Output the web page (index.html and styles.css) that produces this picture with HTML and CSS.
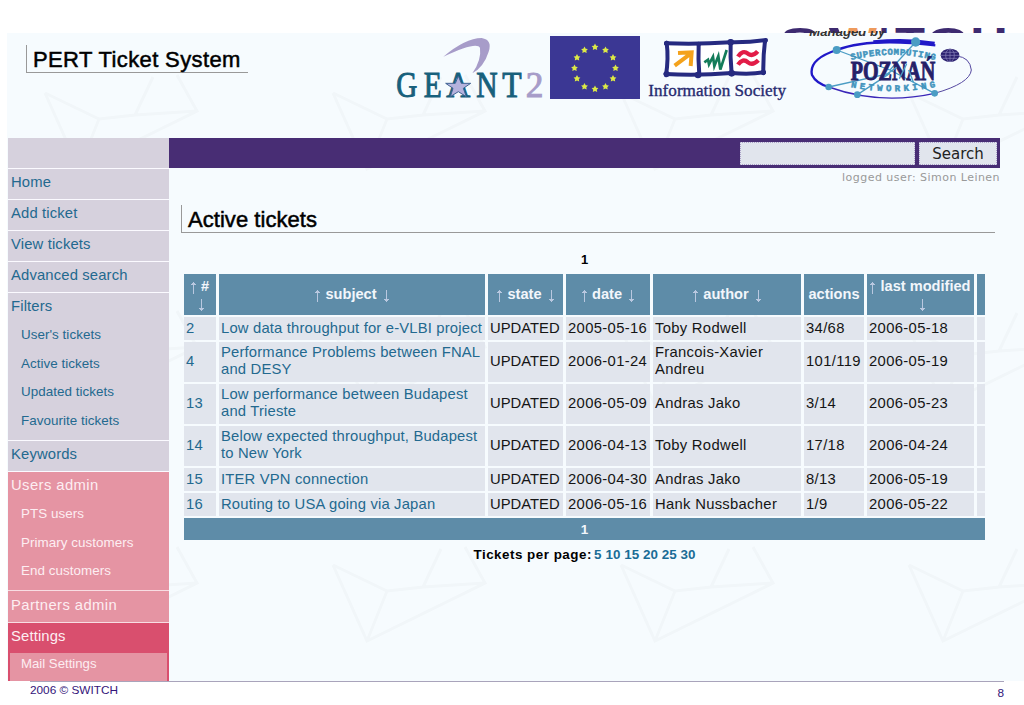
FILE: index.html
```
<!DOCTYPE html>
<html lang="en">
<head>
  <meta charset="UTF-8">
  <title>PERT Ticket System</title>
  <link rel="stylesheet" href="styles.css">
</head>
<body>

  <div class="slide-top">
    <svg class="switch-logo" width="228" height="33" viewBox="780 0 228 33">
      <g font-family="Liberation Sans" font-weight="bold" font-size="42" fill="#3d2a70">
        <text x="780" y="57" textLength="40" lengthAdjust="spacingAndGlyphs">S</text>
        <text x="829" y="57" textLength="48" lengthAdjust="spacingAndGlyphs" fill="#ee9a5c">W</text>
        <text x="879" y="57" textLength="10" lengthAdjust="spacingAndGlyphs">I</text>
        <text x="895" y="57" textLength="30" lengthAdjust="spacingAndGlyphs">T</text>
        <text x="926" y="57" textLength="42" lengthAdjust="spacingAndGlyphs">C</text>
        <text x="970" y="57" textLength="38" lengthAdjust="spacingAndGlyphs">H</text>
      </g>
      <path d="M829 28 H838 L840 33 H831 Z" fill="#3d2a70"/>
    </svg>
  </div>

  <div class="app">
    <!-- envelope watermark -->
    <svg class="watermark" width="1017" height="648">
      <defs>
        <pattern id="envelopes" x="30" y="38" width="288" height="236" patternUnits="userSpaceOnUse">
          <path d="M8 22 L42 98 L160 40 L140 4 M8 22 L62 48 L98 44 L116 6 M62 48 L42 98 M98 44 L160 40" fill="none" stroke="#f1f6f9" stroke-width="3"/>
        </pattern>
      </defs>
      <rect width="1017" height="648" fill="url(#envelopes)"/>
    </svg>

    <header>
      <h1>PERT Ticket System</h1>
      <div class="logos">
        <svg class="geant" width="155" height="66" viewBox="45 39 465 198">
          <path d="M190 110 Q255 55 305 54 Q338 60 326 95 Q312 140 277 160 Q305 120 300 84 Q292 62 190 110 Z" fill="#a79cc9"/>
          <g font-family="Liberation Serif" font-size="108" fill="#17607c" stroke="#17607c" stroke-width="3">
            <text x="49" y="230" textLength="63" lengthAdjust="spacingAndGlyphs">G</text>
            <text x="131" y="230" textLength="54" lengthAdjust="spacingAndGlyphs">E</text>
            <text x="199" y="230" textLength="72" lengthAdjust="spacingAndGlyphs">A</text>
            <text x="289" y="230" textLength="64" lengthAdjust="spacingAndGlyphs">N</text>
            <text x="367" y="230" textLength="58" lengthAdjust="spacingAndGlyphs">T</text>
            <text x="437" y="230" textLength="53" lengthAdjust="spacingAndGlyphs" fill="#a79cc9" stroke="#a79cc9">2</text>
          </g>
          <path d="M235 168 L244 190 L272 190 L250 205 L259 230 L235 215 L211 230 L219 205 L197 190 L226 190 Z" fill="#b5b2dd" stroke="#3f6292" stroke-width="3"/>
        </svg>

        <svg class="flag" width="90" height="63" viewBox="0 0 90 63">
          <defs>
            <path id="star" d="M0 -3.4 L1.2 -1.3 L3.4 -1 L1.8 .7 L2.2 3 L0 2 L-2.2 3 L-1.8 .7 L-3.4 -1 L-1.2 -1.3 Z"/>
          </defs>
          <rect width="90" height="63" fill="#3b3794"/>
          <g fill="#dce946">
            <use href="#star" x="45" y="11"/>
            <use href="#star" x="55.5" y="14"/>
            <use href="#star" x="63" y="21.5"/>
            <use href="#star" x="65.5" y="32"/>
            <use href="#star" x="63" y="42.5"/>
            <use href="#star" x="55.5" y="50.5"/>
            <use href="#star" x="45" y="53"/>
            <use href="#star" x="34.5" y="50.5"/>
            <use href="#star" x="27" y="42.5"/>
            <use href="#star" x="24.5" y="32"/>
            <use href="#star" x="27" y="21.5"/>
            <use href="#star" x="34.5" y="14"/>
          </g>
        </svg>

        <svg class="infosoc" width="142" height="69" viewBox="18 39 426 207">
          <path d="M80 70 L372 62 L368 160 L80 163 Z" fill="#fff"/>
          <g fill="none" stroke="#262a80" stroke-width="12" stroke-linecap="round">
            <path d="M78 70 Q170 74 272 67 Q330 68 378 60"/>
            <path d="M80 68 Q86 115 78 166"/>
            <path d="M176 72 Q174 115 178 166"/>
            <path d="M272 64 Q270 110 275 162"/>
            <path d="M375 62 Q369 110 370 160"/>
            <path d="M76 162 Q170 168 275 159 Q330 164 372 157"/>
          </g>
          <g fill="#262a80">
            <circle cx="80" cy="70" r="8"/><circle cx="176" cy="72" r="7"/><circle cx="272" cy="67" r="10"/><circle cx="375" cy="64" r="7"/>
            <circle cx="80" cy="162" r="9"/><circle cx="174" cy="165" r="10"/><circle cx="275" cy="160" r="10"/><circle cx="370" cy="157" r="8"/>
          </g>
          <path d="M104 137 L152 101 M114 99 L155 97 L152 138" fill="none" stroke="#f4a21c" stroke-width="12"/>
          <path d="M193 127 L204 119 L207 133 L219 110 L223 138 L235 108 L241 149 L260 90" fill="none" stroke="#147c5a" stroke-width="8"/>
          <path d="M294 110 Q308 88 324 101 Q338 111 353 94 M294 134 Q308 113 324 127 Q338 138 355 121" fill="none" stroke="#e21c47" stroke-width="13"/>
          <text x="25" y="228" font-family="Liberation Serif" font-size="50" fill="#262a70" stroke="#262a70" stroke-width="1" textLength="413" lengthAdjust="spacingAndGlyphs">Information Society</text>
        </svg>

        <svg class="poznan" width="166" height="70" viewBox="504 33 498 210">
          <defs>
            <path id="arc-top" d="M634 120 Q760 88 890 122"/>
            <path id="arc-bottom" d="M632 202 Q760 226 892 200"/>
          </defs>
          <text x="508" y="49" font-family="Liberation Sans" font-style="italic" font-weight="bold" font-size="36" fill="#333" textLength="228" lengthAdjust="spacingAndGlyphs">Managed by</text>
          <path d="M886 76 Q690 52 590 90 Q505 118 516 165 Q528 190 566 201" fill="none" stroke="#2018c8" stroke-width="7"/>
          <path d="M884 70 Q800 57 700 66" fill="none" stroke="#2018c8" stroke-width="10"/>
          <path d="M566 201 Q720 256 884 220" fill="none" stroke="#3a26b8" stroke-width="4"/>
          <path d="M884 220 Q990 190 994 150 Q990 112 950 108" fill="none" stroke="#5548a0" stroke-width="3"/>
          <path d="M590 90 L750 150 L827 66 M566 201 L750 160 L652 224 M750 150 L884 220" fill="none" stroke="#4a9cc4" stroke-width="4"/>
          <g font-family="Liberation Mono" font-weight="bold" fill="#3f93bc" stroke="#3f93bc" stroke-width="1.5">
            <text font-size="27"><textPath href="#arc-top" textLength="254">SUPERCOMPUTING</textPath></text>
            <text font-size="27"><textPath href="#arc-bottom" textLength="256">NETWORKING</textPath></text>
          </g>
          <text x="632" y="180" font-family="Liberation Serif" font-weight="bold" font-size="84" fill="#252068" stroke="#252068" stroke-width="3" textLength="254" lengthAdjust="spacingAndGlyphs">POZNAŃ</text>
          <path d="M735 166 L770 142 M778 176 L800 132 M820 186 L806 150" stroke="#4a9cc4" stroke-width="4"/>
          <g fill="#4a9cc4">
            <circle cx="827" cy="66" r="14"/><circle cx="590" cy="90" r="12"/><circle cx="566" cy="201" r="10"/>
            <circle cx="652" cy="224" r="10"/><circle cx="884" cy="220" r="10"/>
          </g>
          <ellipse cx="930" cy="106" rx="28" ry="20" fill="#2c2170"/>
          <path d="M903 106 H957 M930 87 V125 M908 97 H952 M908 115 H952" stroke="#8d87bd" stroke-width="2"/>
          <ellipse cx="930" cy="106" rx="13" ry="19" fill="none" stroke="#8d87bd" stroke-width="2"/>
        </svg>
      </div>
    </header>

    <div class="layout">
      <!-- SIDEBAR -->
      <nav class="menu">
        <div class="item"></div>
        <div class="item"><a href="#">Home</a></div>
        <div class="item"><a href="#">Add ticket</a></div>
        <div class="item"><a href="#">View tickets</a></div>
        <div class="item"><a href="#">Advanced search</a></div>
        <div class="item filters">
          <a href="#">Filters</a>
          <ul>
            <li><a href="#">User's tickets</a></li>
            <li><a href="#">Active tickets</a></li>
            <li><a href="#">Updated tickets</a></li>
            <li><a href="#">Favourite tickets</a></li>
          </ul>
        </div>
        <div class="item"><a href="#">Keywords</a></div>
        <div class="item admin users">
          <a href="#" class="wide">Users admin</a>
          <ul>
            <li><a href="#">PTS users</a></li>
            <li><a href="#">Primary customers</a></li>
            <li><a href="#">End customers</a></li>
          </ul>
        </div>
        <div class="item admin partners"><a href="#" class="wide">Partners admin</a></div>
        <div class="item admin settings">
          <a href="#">Settings</a>
          <div class="sub"><a href="#">Mail Settings</a></div>
        </div>
      </nav>

      <!-- CONTENT -->
      <main>
        <form class="search">
          <input type="text">
          <button type="button">Search</button>
        </form>
        <p class="logged">logged user: Simon Leinen</p>

        <h2>Active tickets</h2>
        <p class="pages">1</p>

        <table>
          <colgroup>
            <col class="c-id"><col class="c-subject"><col class="c-state"><col class="c-date">
            <col class="c-author"><col class="c-actions"><col class="c-modified"><col class="c-end">
          </colgroup>
          <thead>
            <tr>
              <th><i class="up"></i> #<br><i class="down"></i></th>
              <th><i class="up"></i> subject <i class="down"></i></th>
              <th><i class="up"></i> state <i class="down"></i></th>
              <th><i class="up"></i> date <i class="down"></i></th>
              <th><i class="up"></i> author <i class="down"></i></th>
              <th>actions</th>
              <th><i class="up"></i> last modified<br><i class="down"></i></th>
              <th></th>
            </tr>
          </thead>
          <tbody>
            <tr>
              <td class="num"><a href="#">2</a></td><td class="subject"><a href="#">Low data throughput for e-VLBI project</a></td>
              <td class="state">UPDATED</td><td class="num">2005-05-16</td><td class="author">Toby Rodwell</td><td class="num">34/68</td><td class="num">2006-05-18</td><td></td>
            </tr>
            <tr class="tall">
              <td class="num"><a href="#">4</a></td><td class="subject"><a href="#">Performance Problems between FNAL<br>and DESY</a></td>
              <td class="state">UPDATED</td><td class="num">2006-01-24</td><td class="author">Francois-Xavier<br>Andreu</td><td class="num">101/119</td><td class="num">2006-05-19</td><td></td>
            </tr>
            <tr class="tall">
              <td class="num"><a href="#">13</a></td><td class="subject"><a href="#">Low performance between Budapest<br>and Trieste</a></td>
              <td class="state">UPDATED</td><td class="num">2006-05-09</td><td class="author">Andras Jako</td><td class="num">3/14</td><td class="num">2006-05-23</td><td></td>
            </tr>
            <tr class="tall">
              <td class="num"><a href="#">14</a></td><td class="subject"><a href="#">Below expected throughput, Budapest<br>to New York</a></td>
              <td class="state">UPDATED</td><td class="num">2006-04-13</td><td class="author">Toby Rodwell</td><td class="num">17/18</td><td class="num">2006-04-24</td><td></td>
            </tr>
            <tr>
              <td class="num"><a href="#">15</a></td><td class="subject"><a href="#">ITER VPN connection</a></td>
              <td class="state">UPDATED</td><td class="num">2006-04-30</td><td class="author">Andras Jako</td><td class="num">8/13</td><td class="num">2006-05-19</td><td></td>
            </tr>
            <tr>
              <td class="num"><a href="#">16</a></td><td class="subject"><a href="#">Routing to USA going via Japan</a></td>
              <td class="state">UPDATED</td><td class="num">2006-05-16</td><td class="author">Hank Nussbacher</td><td class="num">1/9</td><td class="num">2006-05-22</td><td></td>
            </tr>
          </tbody>
          <tfoot>
            <tr><th colspan="8">1</th></tr>
          </tfoot>
        </table>

        <p class="per-page">Tickets per page:
          <span><a href="#">5</a> <a href="#">10</a> <a href="#">15</a> <a href="#">20</a> <a href="#">25</a> <a href="#">30</a></span>
        </p>
      </main>
    </div>
  </div>

  <footer>
    <span>2006 © SWITCH</span>
    <span class="page-no">8</span>
  </footer>

</body>
</html>
```
FILE: styles.css
```
* { margin: 0; padding: 0; box-sizing: border-box; }
body {
  width: 1024px;
  height: 705px;
  overflow: hidden;
  background: #fff;
  color: #151515;
  font-family: "Liberation Sans", Arial, sans-serif;
  font-size: 14.8px;
}
a { color: #23698f; text-decoration: none; }
svg { display: block; }

/* TOP STRIP */
.slide-top {
  height: 33px;
  padding-right: 16px;
  display: flex;
  justify-content: flex-end;
}

.app {
  position: relative;
  height: 648px;
  margin-left: 7px;
  background: #f6fbfe;
}
.watermark {
  position: absolute;
  left: 0;
  top: 0;
}

/* HEADER */
header {
  position: relative;
  height: 105px;
  display: flex;
  align-items: flex-start;
}
h1, h2 {
  font-size: 22px;
  font-weight: normal;
  color: #000;
  -webkit-text-stroke: 0.5px #000;
  border-left: 1px solid #999;
  border-bottom: 1px solid #999;
}
h1 {
  width: 222px;
  height: 28px;
  margin: 12px 0 0 19px;
  padding-left: 6px;
  line-height: 29px;
  letter-spacing: 0.38px;
  white-space: nowrap;
}
.logos {
  display: flex;
  margin-left: 147px;
}
.flag { margin-top: 3px; }
.infosoc { margin-left: 6px; }
.poznan { margin: -2px 0 0 20px; }

.layout {
  position: relative;
  display: flex;
  height: 543px;
  padding-left: 1px;
}

/* SIDEBAR */
.menu {
  width: 161px;
  height: 543px;
  overflow: hidden;
}
.item {
  height: 31px;
  padding: 5px 0 0 3px;
  background: #d6d1dd;
  border-bottom: 1px solid #fbfaff;
  line-height: 17px;
  letter-spacing: 0.15px;
}
.item a { display: block; }
.filters { height: 148px; }
.users { height: 119px; }
.item ul {
  list-style: none;
  margin: 6px 0 0 10px;
  font-size: 13.4px;
  letter-spacing: 0.05px;
}
.item li {
  height: 28.6px;
  line-height: 28px;
}
.admin { background: #e594a3; border-color: #f8dde3; }
.admin a { color: #fdeef2; }
.wide { letter-spacing: 0.5px; }
.partners { height: 32px; padding-top: 6px; }
.wide { letter-spacing: 0.42px; }
.settings {
  height: 60px;
  background: #d94f6e;
}
.sub {
  height: 32px;
  margin: 8px 2px 0 -1px;
  padding-left: 11px;
  background: #e594a3;
  font-size: 13.2px;
  letter-spacing: 0;
  line-height: 22px;
}

/* CONTENT */
main { width: 831px; }
.search {
  height: 30px;
  padding: 4px 3px 3px 0;
  display: flex;
  justify-content: flex-end;
  gap: 4px;
  background: #482d74;
}
.search input, .search button {
  height: 23px;
  background: #e1e5ed;
  border: 1px dotted #aaa0c8;
}
.search input { width: 175px; }
.search button {
  width: 78px;
  color: #222;
  font: 15px/20px "DejaVu Sans", sans-serif;
}
.logged {
  height: 17px;
  color: #999;
  font: 11px/19px "DejaVu Sans", sans-serif;
  letter-spacing: 0.46px;
  text-align: right;
}
h2 {
  width: 814px;
  height: 28px;
  margin: 20px 0 0 12px;
  padding-left: 6px;
  line-height: 29px;
  letter-spacing: 0.05px;
}
.pages {
  margin-top: 19px;
  font-size: 13px;
  line-height: 16px;
  font-weight: bold;
  text-align: center;
  color: #000;
}

/* TICKETS */
table {
  width: 807px;
  margin: 4px 0 0 12px;
  table-layout: fixed;
  border-collapse: separate;
  border-spacing: 3px 2px;
  line-height: 17px;
}
.c-id { width: 32px; }
.c-subject { width: 266px; }
.c-state { width: 75px; }
.c-date { width: 84px; }
.c-author { width: 148px; }
.c-actions { width: 60px; }
.c-modified { width: 107px; }
.c-end { width: 8px; }
td {
  height: 23px;
  padding: 0 0 1px 2px;
  background: #e1e5ed;
  white-space: nowrap;
  vertical-align: middle;
}
.tall td { height: 40px; padding-bottom: 2px; }
.num { letter-spacing: 0.35px; }
.subject { letter-spacing: 0.18px; }
.author { letter-spacing: 0.3px; }
.state { letter-spacing: 0; }
th {
  background: #5e8ca8;
  color: #f2f6fb;
  font-size: 14.6px;
}
thead th { height: 41px; white-space: nowrap; }
tfoot th { height: 22px; font-size: 13.5px; }

/* sort arrows */
.up, .down {
  display: inline-block;
  width: 6px;
  height: 12px;
  vertical-align: -3px;
  background:
    linear-gradient(#b9c8e0, #b9c8e0) 2px 0 / 1px 12px no-repeat,
    linear-gradient(#b9c8e0, #b9c8e0) 1px 1px / 3px 1px no-repeat,
    linear-gradient(#b9c8e0, #b9c8e0) 0 2px / 5px 1px no-repeat;
}
.down { transform: rotate(180deg); margin-left: 2px; }

.per-page {
  margin-top: 4px;
  color: #000;
  font-size: 13.4px;
  font-weight: bold;
  line-height: 17px;
  letter-spacing: 0.5px;
  text-align: center;
}
.per-page span { letter-spacing: 0.05px; margin-left: -2px; }
.per-page a { color: #1a6c96; }

/* FOOTER */
footer {
  width: 974px;
  margin-left: 30px;
  display: flex;
  justify-content: space-between;
  border-top: 1px solid #a9a4bb;
  color: #33157a;
  font-size: 11.8px;
  line-height: 16px;
}
.page-no { padding-top: 3px; }
```
